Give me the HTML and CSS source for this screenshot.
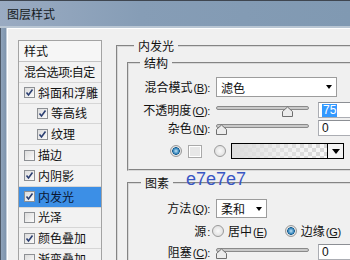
FILE: index.html
```html
<!DOCTYPE html>
<html lang="zh-CN">
<head>
<meta charset="utf-8">
<title>图层样式</title>
<link rel="stylesheet" href="styles.css">
</head>
<body>
<div class="window">
	<div class="titlebar">图层样式</div>
	<div class="frame">
		<div class="frameEdge"></div>
		<div class="content">
			<ul class="styleList">
				<li class="listHead">样式</li>
				<li class="tight">混合选项:自定</li>
				<li><span class="chk on"><svg viewBox="0 0 9 9"><polyline points="1.5,4.5 3.5,7 7.5,1.5"/></svg></span>斜面和浮雕</li>
				<li class="sub"><span class="chk on"><svg viewBox="0 0 9 9"><polyline points="1.5,4.5 3.5,7 7.5,1.5"/></svg></span>等高线</li>
				<li class="sub"><span class="chk on"><svg viewBox="0 0 9 9"><polyline points="1.5,4.5 3.5,7 7.5,1.5"/></svg></span>纹理</li>
				<li><span class="chk"></span>描边</li>
				<li><span class="chk on"><svg viewBox="0 0 9 9"><polyline points="1.5,4.5 3.5,7 7.5,1.5"/></svg></span>内阴影</li>
				<li class="active"><span class="chk on"><svg viewBox="0 0 9 9"><polyline points="1.5,4.5 3.5,7 7.5,1.5"/></svg></span>内发光</li>
				<li><span class="chk"></span>光泽</li>
				<li><span class="chk on"><svg viewBox="0 0 9 9"><polyline points="1.5,4.5 3.5,7 7.5,1.5"/></svg></span>颜色叠加</li>
				<li><span class="chk"></span>渐变叠加</li>
			</ul>

			<fieldset class="group outer">
				<legend>内发光</legend>
				<fieldset class="group struct">
					<legend>结构</legend>
					<div class="row r1">
						<label>混合模式<span class="key">(<u>B</u>):</span></label>
						<div class="select blend">滤色<i class="arrow"></i></div>
					</div>
					<div class="row r2">
						<label>不透明度<span class="key">(<u>O</u>):</span></label>
						<div class="ctl">
							<svg class="slider" width="93" height="12" viewBox="0 0 93 12"><rect x="0.5" y="1.5" width="92" height="3" rx="1.5"/><path d="M66.5 11.5V6.5L71.5 2L76.5 6.5V11.5Z"/></svg>
							<div class="num"><span class="sel">75</span></div>
						</div>
					</div>
					<div class="row r3">
						<label>杂色<span class="key">(<u>N</u>):</span></label>
						<div class="ctl">
							<svg class="slider" width="93" height="12" viewBox="0 0 93 12"><rect x="0.5" y="1.5" width="92" height="3" rx="1.5"/><path d="M0.5 11.5V6.5L5.5 2L10.5 6.5V11.5Z"/></svg>
							<div class="num">0</div>
						</div>
					</div>
					<div class="colorRow">
						<span class="radio on"></span>
						<span class="swatch"></span>
						<span class="radio"></span>
						<div class="gradient"><span class="gradBtn"><i class="arrow"></i></span></div>
					</div>
				</fieldset>
				<fieldset class="group elem">
					<legend>图素</legend>
					<div class="row r4">
						<label>方法<span class="key">(<u>Q</u>):</span></label>
						<div class="select method">柔和<i class="arrow"></i></div>
					</div>
					<div class="row r5">
						<label>源<span class="key">:</span></label>
						<div class="ctl source">
							<span class="radio"></span><span class="opt">居中<span class="key">(<u>E</u>)</span></span>
							<span class="radio on"></span><span class="opt">边缘<span class="key">(<u>G</u>)</span></span>
						</div>
					</div>
					<div class="row r6">
						<label>阻塞<span class="key">(<u>C</u>):</span></label>
						<div class="ctl">
							<svg class="slider" width="93" height="12" viewBox="0 0 93 12"><rect x="0.5" y="1.5" width="92" height="3" rx="1.5"/><path d="M0.5 11.5V6.5L5.5 2L10.5 6.5V11.5Z"/></svg>
							<div class="num">0</div>
						</div>
					</div>
				</fieldset>
			</fieldset>
		</div>
	</div>
	<div class="note">e7e7e7</div>
</div>
</body>
</html>
```

FILE: styles.css
```css
*{
	box-sizing:border-box;
}
body{
	margin:0;
	width:350px;
	height:260px;
	overflow:hidden;
	font-family:"Liberation Sans","Noto Sans CJK SC",sans-serif;
	font-size:12px;
	color:#111;
}
.window{
	position:relative;
	width:350px;
	height:260px;
	overflow:hidden;
	display:flex;
	flex-direction:column;
	background:#f0f0f0;
}
.titlebar{
	height:28px;
	flex-shrink:0;
	line-height:25px;
	padding-left:7px;
	border-top:1px solid #3f4650;
	border-bottom:2px solid #b9c6d3;
	background:linear-gradient(to right,#9aabc2,#869db6 40%,#8099b2);
	color:#151a22;
	font-family:"Noto Sans CJK SC",sans-serif;
}
.frame{
	flex:1;
	display:flex;
	min-height:0;
}
.frameEdge{
	width:7px;
	flex-shrink:0;
	background:linear-gradient(to right,#4d5866 0,#4d5866 1px,#8fa3ba 1px,#7e94ad 6px,#c3cdd8 6px);
}
.content{
	flex:1;
	min-width:0;
	overflow:hidden;
	display:flex;
	align-items:flex-start;
	border-top:1px solid #fff;
	border-left:1px solid #fff;
}

/* 左侧样式列表 */
.styleList{
	list-style:none;
	margin:11px 0 0 10px;
	padding:0;
	width:84px;
	flex-shrink:0;
	border:1px solid #a3a3a3;
	border-bottom:0;
	background:#f2f2f2;
	font-family:"Noto Sans CJK SC",sans-serif;
}
.styleList li{
	height:20.8px;
	display:flex;
	align-items:center;
	padding-left:5px;
	border-bottom:1px solid #d6d6d6;
	white-space:nowrap;
	line-height:14px;
}
.styleList .listHead{
	height:21px;
	background:#f6f6f6;
	border-bottom:1px solid #c4c4c4;
}
.styleList .tight{
	letter-spacing:-0.7px;
}
.styleList .sub{
	padding-left:18px;
}
.styleList .active{
	background:#3c8fe6;
	color:#0b1733;
}
.chk{
	width:11px;
	height:11px;
	margin-right:3px;
	border:1px solid #8d9094;
	background:linear-gradient(135deg,#dcdcdc,#fbfbfb);
	display:flex;
	align-items:center;
	justify-content:center;
	flex-shrink:0;
}
.chk svg{
	width:9px;
	height:9px;
}
.chk polyline{
	fill:none;
	stroke:#2b3f72;
	stroke-width:1.6;
}

/* 分组框 */
.group{
	margin:0;
	padding:0;
	border:2px groove #d8d8d8;
	min-width:0;
}
.group legend{
	line-height:16px;
	padding:0 4px;
	font-family:"Noto Sans CJK SC",sans-serif;
}
.outer{
	margin:9px 0 0 14px;
	padding-left:9px;
	width:250px;
	flex-shrink:0;
}
.outer > legend{
	margin-left:7px;
}
.struct{
	margin-top:1px;
	padding-bottom:10px;
}
.struct legend{
	margin-left:11px;
}
.elem{
	margin-top:4px;
	padding-bottom:20px;
}
.elem legend{
	margin-left:12px;
}

.row{
	display:grid;
	grid-template-columns:81px 1fr;
	column-gap:6px;
	align-items:center;
}
.row label{
	text-align:right;
	white-space:nowrap;
	font-family:"Noto Sans CJK SC",sans-serif;
	line-height:14px;
}
.key{
	font-family:"Liberation Sans",sans-serif;
	font-size:11px;
	letter-spacing:-0.3px;
	margin-left:1px;
}
.r1{ margin-top:6px; height:20px; }
.r2{ margin-top:5px; height:16px; }
.r3{ margin-top:2px; height:16px; }
.r4{ margin-top:8px; height:18px; }
.r5{ margin-top:6px; height:16px; }
.r6{ margin-top:5px; height:16px; }

.ctl{
	display:flex;
	align-items:center;
	height:100%;
}
.slider{
	flex-shrink:0;
	margin-top:2px;
}
.slider rect{
	fill:#c9c9c9;
	stroke:#8a8a8a;
}
.slider path{
	fill:#ececec;
	stroke:#6f6f6f;
}
.num{
	margin-left:9px;
	width:40px;
	flex-shrink:0;
	height:16px;
	background:#fff;
	border:1px solid #abadb3;
	border-top-color:#8c8f94;
	padding-left:3px;
	line-height:14px;
	font-size:12px;
}
.num .sel{
	display:inline-block;
	background:#3399ff;
	color:#fff;
	padding:0 1px;
	line-height:13px;
}

.select{
	position:relative;
	height:100%;
	background:#fff;
	border:1px solid #9c9c9c;
	padding-left:4px;
	display:flex;
	align-items:center;
	font-family:"Noto Sans CJK SC",sans-serif;
}
.blend{ width:121px; }
.method{ width:51px; }
.arrow{
	width:0;
	height:0;
	border-top:4px solid #000;
	border-left:3.5px solid transparent;
	border-right:3.5px solid transparent;
	margin-left:auto;
	margin-right:4px;
}

.colorRow{
	margin:7px 0 0 41px;
	height:16px;
	display:flex;
	align-items:center;
}
.radio{
	width:12px;
	height:12px;
	border-radius:50%;
	border:1px solid #9a9a9a;
	background:radial-gradient(circle,#fafafa,#d8d8d8);
	flex-shrink:0;
}
.radio.on{
	background:radial-gradient(circle,#bfe3f7 0,#2e7fb6 3px,#1c5d8c 3.6px,#e9e9e9 4px,#cfcfcf);
}
.swatch{
	width:14px;
	height:13px;
	flex-shrink:0;
	margin:0 12px 0 6px;
	border:1px solid #a9a9a9;
	background:#e7e7e7;
	box-shadow:inset 0 0 0 1px #fff;
}
.gradient{
	margin-left:5px;
	width:113px;
	flex-shrink:0;
	height:16px;
	border:1px solid #000;
	display:flex;
	justify-content:flex-end;
	background:
		linear-gradient(to right,#dcdcdc 0,rgba(231,231,231,.6) 45%,rgba(231,231,231,0) 95%),
		repeating-conic-gradient(#d6d6d6 0 25%,#fbfbfb 0 50%) 0 0/8px 8px;
}
.gradBtn{
	width:16px;
	height:100%;
	background:#f4f4f4;
	border-left:1px solid #000;
	display:flex;
	align-items:center;
}
.gradBtn .arrow{
	margin:0 auto;
	border-top-width:5px;
	border-left-width:4px;
	border-right-width:4px;
}

.source .radio{
	margin-left:-4px;
}
.source .opt{
	margin:0 22px 0 4px;
	font-family:"Noto Sans CJK SC",sans-serif;
	white-space:nowrap;
	line-height:14px;
}

.note{
	position:absolute;
	left:186px;
	top:170px;
	font-family:"Liberation Sans",sans-serif;
	font-size:18px;
	line-height:18px;
	color:#3956c4;
}
```
